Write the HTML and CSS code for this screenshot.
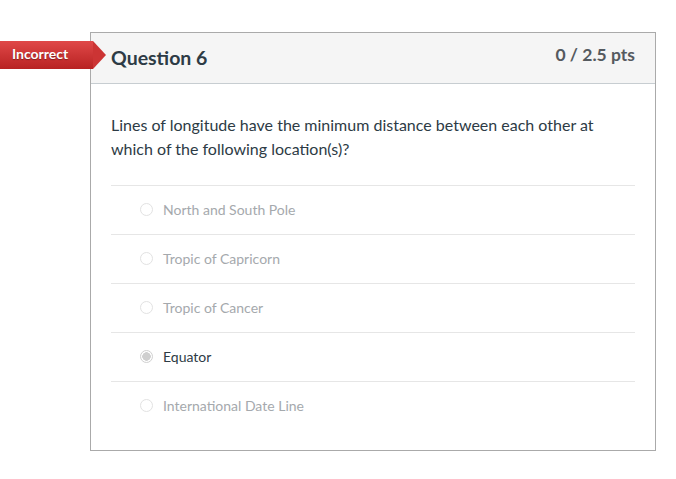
FILE: index.html
```html
<!DOCTYPE html>
<html>
<head>
<meta charset="utf-8">
<link rel="stylesheet" href="styles.css">
</head>
<body>
<div class="page">
  <div class="badge">Incorrect</div>
  <div class="question">
    <div class="q-header">
      <h2 class="q-title">Question 6</h2>
      <span class="q-pts">0 / 2.5 pts</span>
    </div>
    <div class="q-body">
      <p class="q-text">Lines of longitude have the minimum distance between each other at which of the following location(s)?</p>
      <div class="answers">
        <div class="answer"><span class="radio"></span><span class="label">North and South Pole</span></div>
        <div class="answer"><span class="radio"></span><span class="label">Tropic of Capricorn</span></div>
        <div class="answer"><span class="radio"></span><span class="label">Tropic of Cancer</span></div>
        <div class="answer selected"><span class="radio"></span><span class="label">Equator</span></div>
        <div class="answer"><span class="radio"></span><span class="label">International Date Line</span></div>
      </div>
    </div>
  </div>
</div>
</body>
</html>
```
FILE: styles.css
```css
html, body {
  margin: 0;
  padding: 0;
  background: #fff;
  font-family: Lato, "Open Sans", sans-serif;
  color: #2d3b45;
}
.page {
  position: relative;
  padding: 32px 0 0 90px;
}
.badge {
  position: absolute;
  left: 0;
  top: 41px;
  width: 93px;
  height: 28px;
  padding-left: 12px;
  box-sizing: border-box;
  line-height: 26px;
  font-size: 14px;
  font-weight: bold;
  color: #fff;
  text-shadow: 0 1px 1px rgba(0,0,0,0.35);
  background: linear-gradient(#e04848, #b82222);
  z-index: 2;
}
.badge::after {
  content: "";
  position: absolute;
  right: -13px;
  top: 0;
  width: 0;
  height: 0;
  border-top: 14px solid transparent;
  border-bottom: 14px solid transparent;
  border-left: 13px solid #cc3434;
}
.question {
  width: 566px;
  box-sizing: border-box;
  border: 1px solid #aaaaaa;
}
.q-header {
  display: flex;
  justify-content: space-between;
  align-items: flex-start;
  height: 50px;
  background: #f5f5f5;
  border-bottom: 1px solid #c7cdd1;
  padding: 0 20px;
}
.q-title {
  margin: 13px 0 0;
  font-size: 19.5px;
  font-weight: bold;
  line-height: 24px;
  color: #2d3b45;
}
.q-pts {
  margin-top: 10px;
  font-size: 17.5px;
  font-weight: bold;
  line-height: 24px;
  color: #555a5f;
}
.q-body {
  padding: 30px 20px 20px;
}
.q-text {
  margin: -1px 0 24px;
  font-size: 16px;
  line-height: 24px;
  color: #2d3b45;
}
.answer {
  display: flex;
  align-items: center;
  height: 46px;
  padding-bottom: 2px;
  border-top: 1px solid #e6e6e6;
  padding-left: 29px;
}
.radio {
  width: 11px;
  height: 11px;
  border-radius: 50%;
  border: 1px solid #e2e2e2;
  background: #fff;
  margin-right: 10px;
}
.label {
  font-size: 14px;
  color: #a5a9ad;
}
.selected .label {
  color: #2d3b45;
}
.selected .radio {
  border-color: #d0d0d0;
  background: radial-gradient(circle, #cfcfcf 0 4px, #fff 4.5px);
}
```
